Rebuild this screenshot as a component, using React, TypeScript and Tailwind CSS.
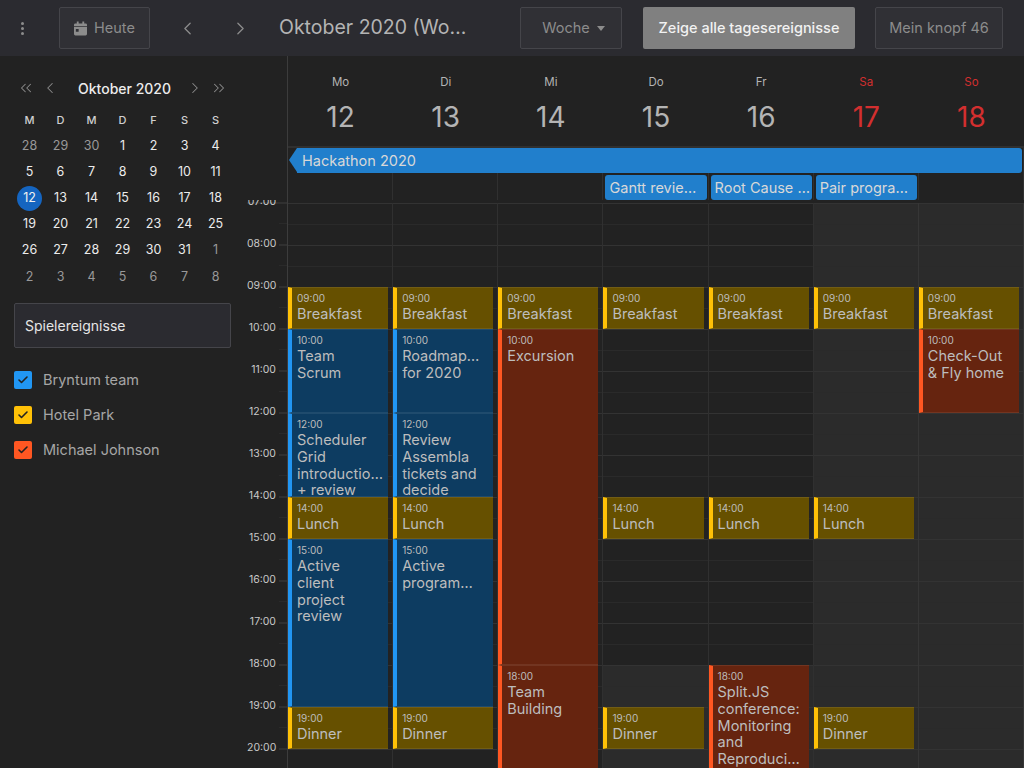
import { ChevronLeft, ChevronRight, ChevronsLeft, ChevronsRight, Check } from 'lucide-react';

type Kind = 'amber' | 'blue' | 'orange';

interface CalEvent {
  day: number;
  start: number;
  end: number;
  time: string;
  lines: string[];
  kind: Kind;
}

const kindClass: Record<Kind, string> = {
  amber: 'bg-[#665000] border-l-[#ffc107] mr-[5px]',
  blue: 'bg-[#0d3c61] border-l-[#2196f3] mr-[5px]',
  orange: 'bg-[#66240f] border-l-[#ff5722] mr-[5px]',
};

const days = [
  { name: 'Mo', date: 12 },
  { name: 'Di', date: 13 },
  { name: 'Mi', date: 14 },
  { name: 'Do', date: 15, lateShade: true },
  { name: 'Fr', date: 16, lateShade: true },
  { name: 'Sa', date: 17, weekend: true },
  { name: 'So', date: 18, weekend: true },
];

const hours = ['07:00', '08:00', '09:00', '10:00', '11:00', '12:00', '13:00', '14:00', '15:00', '16:00', '17:00', '18:00', '19:00', '20:00'];

const meal = (day: number, start: number, name: string): CalEvent => ({
  day,
  start,
  end: start + 1,
  time: `${start}:00`.padStart(5, '0'),
  lines: [name],
  kind: 'amber',
});

const events: CalEvent[] = [
  ...[0, 1, 2, 3, 4, 5, 6].map((d) => meal(d, 9, 'Breakfast')),
  ...[0, 1, 3, 4, 5].map((d) => meal(d, 14, 'Lunch')),
  ...[0, 1, 3, 5].map((d) => meal(d, 19, 'Dinner')),
  { day: 0, start: 10, end: 12, time: '10:00', lines: ['Team', 'Scrum'], kind: 'blue' },
  { day: 0, start: 12, end: 14, time: '12:00', lines: ['Scheduler', 'Grid', 'introductio…', '+ review'], kind: 'blue' },
  { day: 0, start: 15, end: 19, time: '15:00', lines: ['Active', 'client', 'project', 'review'], kind: 'blue' },
  { day: 1, start: 10, end: 12, time: '10:00', lines: ['Roadmap…', 'for 2020'], kind: 'blue' },
  { day: 1, start: 12, end: 14, time: '12:00', lines: ['Review', 'Assembla', 'tickets and', 'decide'], kind: 'blue' },
  { day: 1, start: 15, end: 19, time: '15:00', lines: ['Active', 'program…'], kind: 'blue' },
  { day: 2, start: 10, end: 18, time: '10:00', lines: ['Excursion'], kind: 'orange' },
  { day: 2, start: 18, end: 22, time: '18:00', lines: ['Team', 'Building'], kind: 'orange' },
  { day: 4, start: 18, end: 22, time: '18:00', lines: ['Split.JS', 'conference:', 'Monitoring', 'and', 'Reproduci…'], kind: 'orange' },
  { day: 6, start: 10, end: 12, time: '10:00', lines: ['Check-Out', '& Fly home'], kind: 'orange' },
];

const miniWeeks = [
  [28, 29, 30, 1, 2, 3, 4],
  [5, 6, 7, 8, 9, 10, 11],
  [12, 13, 14, 15, 16, 17, 18],
  [19, 20, 21, 22, 23, 24, 25],
  [26, 27, 28, 29, 30, 31, 1],
  [2, 3, 4, 5, 6, 7, 8],
];

const calendars = [
  { name: 'Bryntum team', color: 'bg-[#2196f3]' },
  { name: 'Hotel Park', color: 'bg-[#ffc107]' },
  { name: 'Michael Johnson', color: 'bg-[#ff5722]' },
];

function ToolButton({ children, className }: { children: React.ReactNode; className: string }) {
  return (
    <div className={`flex h-[42px] items-center justify-center rounded-[2px] border border-[#45454a] bg-[#303035] text-[14.5px] text-[#8c8c8c] ${className}`}>
      {children}
    </div>
  );
}

function Toolbar() {
  return (
    <div className="flex h-14 shrink-0 items-center bg-[#2b2b30]">
      <div className="flex w-[59px] shrink-0 flex-col items-center gap-[2px] pr-[14px]">
        <span className="h-[3px] w-[3px] rounded-full bg-[#8c8c8c]" />
        <span className="h-[3px] w-[3px] rounded-full bg-[#8c8c8c]" />
        <span className="h-[3px] w-[3px] rounded-full bg-[#8c8c8c]" />
      </div>
      <ToolButton className="w-[91px] gap-[7px]">
        <svg viewBox="0 0 14 15" className="h-[15px] w-[13px] fill-[#8c8c8c]">
          <path d="M3 0h2v2h4V0h2v2h1.5A1.5 1.5 0 0 1 14 3.5V5H0V3.5A1.5 1.5 0 0 1 1.5 2H3zM0 6h14v7.5a1.5 1.5 0 0 1-1.5 1.5h-11A1.5 1.5 0 0 1 0 13.5zm2 2v3h3V8z" />
        </svg>
        Heute
      </ToolButton>
      <ChevronLeft className="ml-[27px] h-[21px] w-[21px] text-[#8c8c8c]" strokeWidth={1.5} />
      <ChevronRight className="ml-[32px] h-[21px] w-[21px] text-[#8c8c8c]" strokeWidth={1.5} />
      <div className="ml-[28px] w-[200px] whitespace-nowrap text-[19.5px] text-[#b4b4b4]">Oktober 2020 (Wo…</div>
      <ToolButton className="ml-[41px] w-[102px] gap-[7px] pl-[5px]">
        Woche
        <span className="h-0 w-0 border-x-[4.5px] border-t-[5px] border-x-transparent border-t-[#8c8c8c]" />
      </ToolButton>
      <div className="ml-[21px] flex h-[42px] w-[212px] items-center justify-center rounded-[2px] bg-[#808080] text-[14.5px] font-medium text-[#f2f2f2]">
        Zeige alle tagesereignisse
      </div>
      <ToolButton className="ml-[20px] w-[128px]">Mein knopf 46</ToolButton>
    </div>
  );
}

function MiniCalendar() {
  return (
    <div className="w-[217px]">
      <div className="flex h-[26px] items-center pl-[3px] pr-[3px] text-[#8c8c8c]">
        <ChevronsLeft className="h-[18px] w-[18px]" strokeWidth={1.4} />
        <ChevronLeft className="ml-[6px] h-[18px] w-[18px]" strokeWidth={1.4} />
        <div className="flex-1 pl-[4px] text-center text-[14px] font-medium text-[#ececec]">Oktober 2020</div>
        <ChevronRight className="h-[18px] w-[18px]" strokeWidth={1.4} />
        <ChevronsRight className="ml-[6px] h-[18px] w-[18px]" strokeWidth={1.4} />
      </div>
      <div className="mt-[7px] grid grid-cols-7 text-center text-[11px] font-medium text-[#d0d0d0]">
        {['M', 'D', 'M', 'D', 'F', 'S', 'S'].map((d, i) => (
          <div key={i} className="h-[25px] leading-[25px]">{d}</div>
        ))}
      </div>
      <div className="grid grid-cols-7 text-center text-[12.5px]">
        {miniWeeks.map((week, w) =>
          week.map((d, i) => {
            const muted = (w === 0 && d > 20) || (w === 4 && d < 8) || w === 5;
            const today = w === 2 && i === 0;
            return (
              <div key={`${w}-${i}`} className="flex h-[26.2px] items-center justify-center">
                {today ? (
                  <span className="flex h-[25px] w-[25px] items-center justify-center rounded-full bg-[#1565c0] text-[#f2f2f2]">{d}</span>
                ) : (
                  <span className={muted ? 'text-[#999999]' : 'text-[#ececec]'}>{d}</span>
                )}
              </div>
            );
          }),
        )}
      </div>
    </div>
  );
}

function Sidebar() {
  return (
    <div className="w-[247px] shrink-0 pl-[14px] pt-[19px]">
      <MiniCalendar />
      <div className="mt-[13px] flex h-[45px] w-[217px] items-center rounded-[2px] border border-[#45454a] bg-[#2b2b30] pl-[10px] text-[14px] text-[#e6e6e6]">
        Spielereignisse
      </div>
      <div className="mt-[23px] flex flex-col gap-[17px]">
        {calendars.map((c) => (
          <div key={c.name} className="flex h-[18px] items-center gap-[11px] text-[14.5px] text-[#a6a6a6]">
            <span className={`flex h-[18px] w-[18px] items-center justify-center rounded-[2px] ${c.color}`}>
              <Check className="h-[12px] w-[12px] text-[#222222]" strokeWidth={3.2} />
            </span>
            {c.name}
          </div>
        ))}
      </div>
    </div>
  );
}

function WeekHeader() {
  return (
    <div className="flex h-[92px] shrink-0">
      <div className="w-[41px] shrink-0 border-r border-[#3c3c3c]" />
      <div className="grid flex-1 grid-cols-7 border-b-2 border-[#303030] text-center">
        {days.map((d) => (
          <div key={d.name} className={d.weekend ? 'text-[#d32f2f]' : 'text-[#b4b4b4]'}>
            <div className="mt-[18px] text-[11.5px] leading-[16px]">{d.name}</div>
            <div className="mt-[11px] text-[28px] leading-[32px]">{d.date}</div>
          </div>
        ))}
      </div>
    </div>
  );
}

function AllDayBar({ label, className }: { label: string; className: string }) {
  return (
    <div className={`flex h-[25px] items-center rounded-[3px] bg-[#217fcc] text-[14.5px] text-[#d8d8d8] ${className}`}>
      <span className="truncate">{label}</span>
    </div>
  );
}

function AllDayRow() {
  return (
    <div className="flex h-[52px] shrink-0">
      <div className="w-[41px] shrink-0 border-r border-[#3c3c3c]" />
      <div className="relative flex-1">
        <div className="absolute inset-0 flex">
          {days.map((d) => (
            <div key={d.name} className="flex-1 border-r border-[#303030]" />
          ))}
        </div>
        <div className="relative grid grid-cols-7 gap-y-[2px]">
          <div className="col-span-7 ml-[9px] mr-[2px]">
            <div className="relative">
              <span className="absolute -left-[8px] top-0 h-0 w-0 border-y-[12.5px] border-r-[8px] border-y-transparent border-r-[#217fcc]" />
              <AllDayBar label="Hackathon 2020" className="rounded-l-none pl-[5px]" />
            </div>
          </div>
          <div className="col-start-4 ml-[2px] mr-[2px]"><AllDayBar label="Gantt revie…" className="pl-[4px]" /></div>
          <div className="ml-[2px] mr-[2px]"><AllDayBar label="Root Cause …" className="pl-[4px]" /></div>
          <div className="ml-[2px] mr-[2px]"><AllDayBar label="Pair progra…" className="pl-[4px]" /></div>
        </div>
      </div>
    </div>
  );
}

function EventBlock({ ev }: { ev: CalEvent }) {
  return (
    <div
      className={`min-w-0 overflow-hidden border-l-[4px] border-y border-y-[#ffffff14] pl-[5px] pr-[4px] pt-[2px] text-[#bdbdbd] ${kindClass[ev.kind]}`}
      style={{ gridColumn: ev.day + 1, gridRow: `${(ev.start - 7) * 2 + 1} / ${(ev.end - 7) * 2 + 1}` }}
    >
      <div className="text-[10px] leading-[16px]">{ev.time}</div>
      {ev.lines.map((line) => (
        <div key={line} className="truncate text-[14.5px] leading-[16.8px]">{line}</div>
      ))}
    </div>
  );
}

function TimeAxis() {
  return (
    <div className="relative z-10 -mt-[18px] w-[40px] shrink-0">
      {hours.map((h) => (
        <div key={h} className="relative flex h-[42px] items-center justify-end">
          <span className="-mt-[2px] pr-[3px] text-[10.5px] leading-none text-[#c8c8c8]">{h}</span>
          <span className="h-[2px] w-[8px] bg-[#303030]" />
          <span className="absolute bottom-0 right-0 h-px w-[8px] bg-[#2a2a2a]" />
        </div>
      ))}
    </div>
  );
}

function TimeGrid() {
  const slots = Array.from({ length: 28 }, (_, i) => i);
  return (
    <div className="relative flex min-h-0 flex-1 overflow-hidden">
      <span className="absolute left-0 top-[2px] z-10 h-[2px] w-[40px] bg-[#303030]" />
      <TimeAxis />
      <div className="relative flex-1 border-l border-[#3c3c3c] pt-[3px]">
        <div className="absolute inset-x-0 top-[3px] flex">
          {days.map((d) => (
            <div key={d.name} className={`flex-1 border-r ${d.weekend ? 'border-[#363636] bg-[#2b2b2b]' : 'border-[#303030] bg-[#222222]'}`}>
              {slots.map((s) => (
                <div
                  key={s}
                  className={`h-[21px] border-t ${s % 2 === 0 ? 'border-[#333333]' : 'border-[#2a2a2a]'} ${d.lateShade && s >= 22 ? 'bg-[#2b2b2b]' : ''}`}
                />
              ))}
            </div>
          ))}
        </div>
        <div className="relative grid grid-cols-7 auto-rows-[21px]">
          {events.map((ev) => (
            <EventBlock key={`${ev.day}-${ev.start}`} ev={ev} />
          ))}
        </div>
      </div>
    </div>
  );
}

export default function App() {
  return (
    <div className="flex h-[768px] w-[1024px] flex-col overflow-hidden bg-[#222222] font-['Inter',sans-serif]">
      <Toolbar />
      <div className="flex min-h-0 flex-1">
        <Sidebar />
        <div className="flex min-w-0 flex-1 flex-col">
          <WeekHeader />
          <AllDayRow />
          <TimeGrid />
        </div>
      </div>
    </div>
  );
}
